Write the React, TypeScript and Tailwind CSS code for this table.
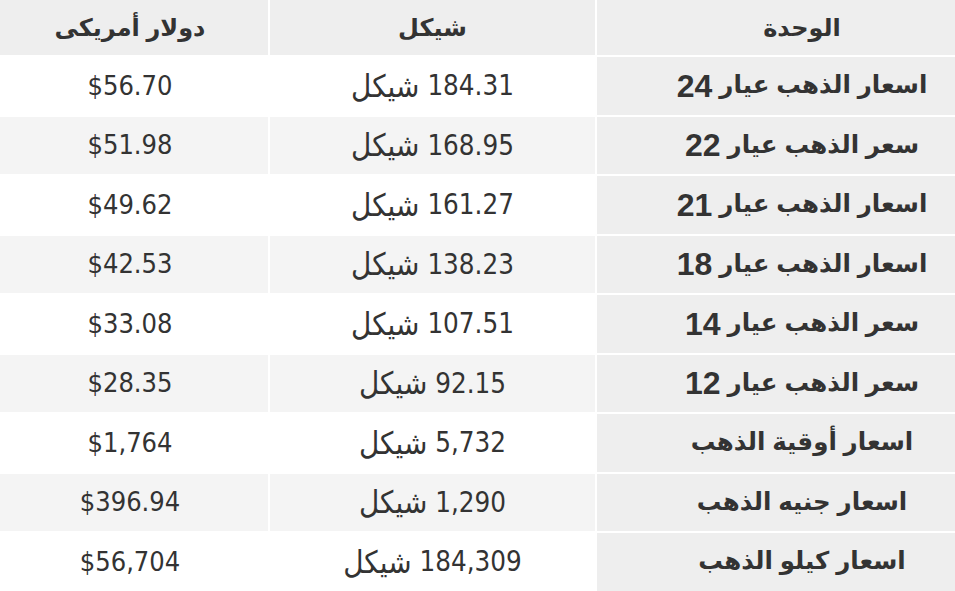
import React from "react";

const rows = [
  { unit: "اسعار الذهب عيار", karat: "24", ils: "184.31", usd: "$56.70" },
  { unit: "سعر الذهب عيار", karat: "22", ils: "168.95", usd: "$51.98" },
  { unit: "اسعار الذهب عيار", karat: "21", ils: "161.27", usd: "$49.62" },
  { unit: "اسعار الذهب عيار", karat: "18", ils: "138.23", usd: "$42.53" },
  { unit: "سعر الذهب عيار", karat: "14", ils: "107.51", usd: "$33.08" },
  { unit: "سعر الذهب عيار", karat: "12", ils: "92.15", usd: "$28.35" },
  { unit: "اسعار أوقية الذهب", karat: "", ils: "5,732", usd: "$1,764" },
  { unit: "اسعار جنيه الذهب", karat: "", ils: "1,290", usd: "$396.94" },
  { unit: "اسعار كيلو الذهب", karat: "", ils: "184,309", usd: "$56,704" },
];

const boldFont = "font-['Liberation_Sans','DejaVu_Sans',sans-serif]";
const plainFont = "font-['DejaVu_Sans_Condensed','DejaVu_Sans',sans-serif]";

export default function App() {
  return (
    <div className="w-[955px] h-[591px] overflow-hidden bg-white text-[#333]">
      <div
        dir="rtl"
        className="grid grid-cols-[358px_325px_268px] grid-rows-[55px_repeat(9,57.5px)] gap-[2px]"
      >
        {/* header */}
        <div className={`bg-[#eeeeee] pl-[52px] flex items-center justify-center text-[24px] font-bold ${boldFont}`}>
          الوحدة
        </div>
        <div className={`bg-[#eeeeee] flex items-center justify-center text-[24px] font-bold ${boldFont}`}>
          شيكل
        </div>
        <div className={`bg-[#eeeeee] pr-[8px] flex items-center justify-center text-[24px] font-bold ${boldFont}`}>
          دولار أمريكى
        </div>

        {rows.map((r, i) => {
          const rowBg = i % 2 === 1 ? "bg-[#f4f4f4]" : "bg-white";
          return (
            <React.Fragment key={i}>
              <div className={`bg-[#eeeeee] pl-[52px] flex items-center justify-center text-[24.5px] font-bold ${boldFont}`}>
                {r.unit}
                {r.karat && <span className="text-[32px] mr-[7px]">{r.karat}</span>}
              </div>
              <div className={`${rowBg} flex items-center justify-center gap-[8px] ${plainFont}`}>
                <span className="text-[27.5px]">{r.ils}</span>
                <span className="text-[31px]">شيكل</span>
              </div>
              <div className={`${rowBg} pr-[8px] flex items-center justify-center text-[27px] ${plainFont}`}>
                <span dir="ltr">{r.usd}</span>
              </div>
            </React.Fragment>
          );
        })}
      </div>
    </div>
  );
}
